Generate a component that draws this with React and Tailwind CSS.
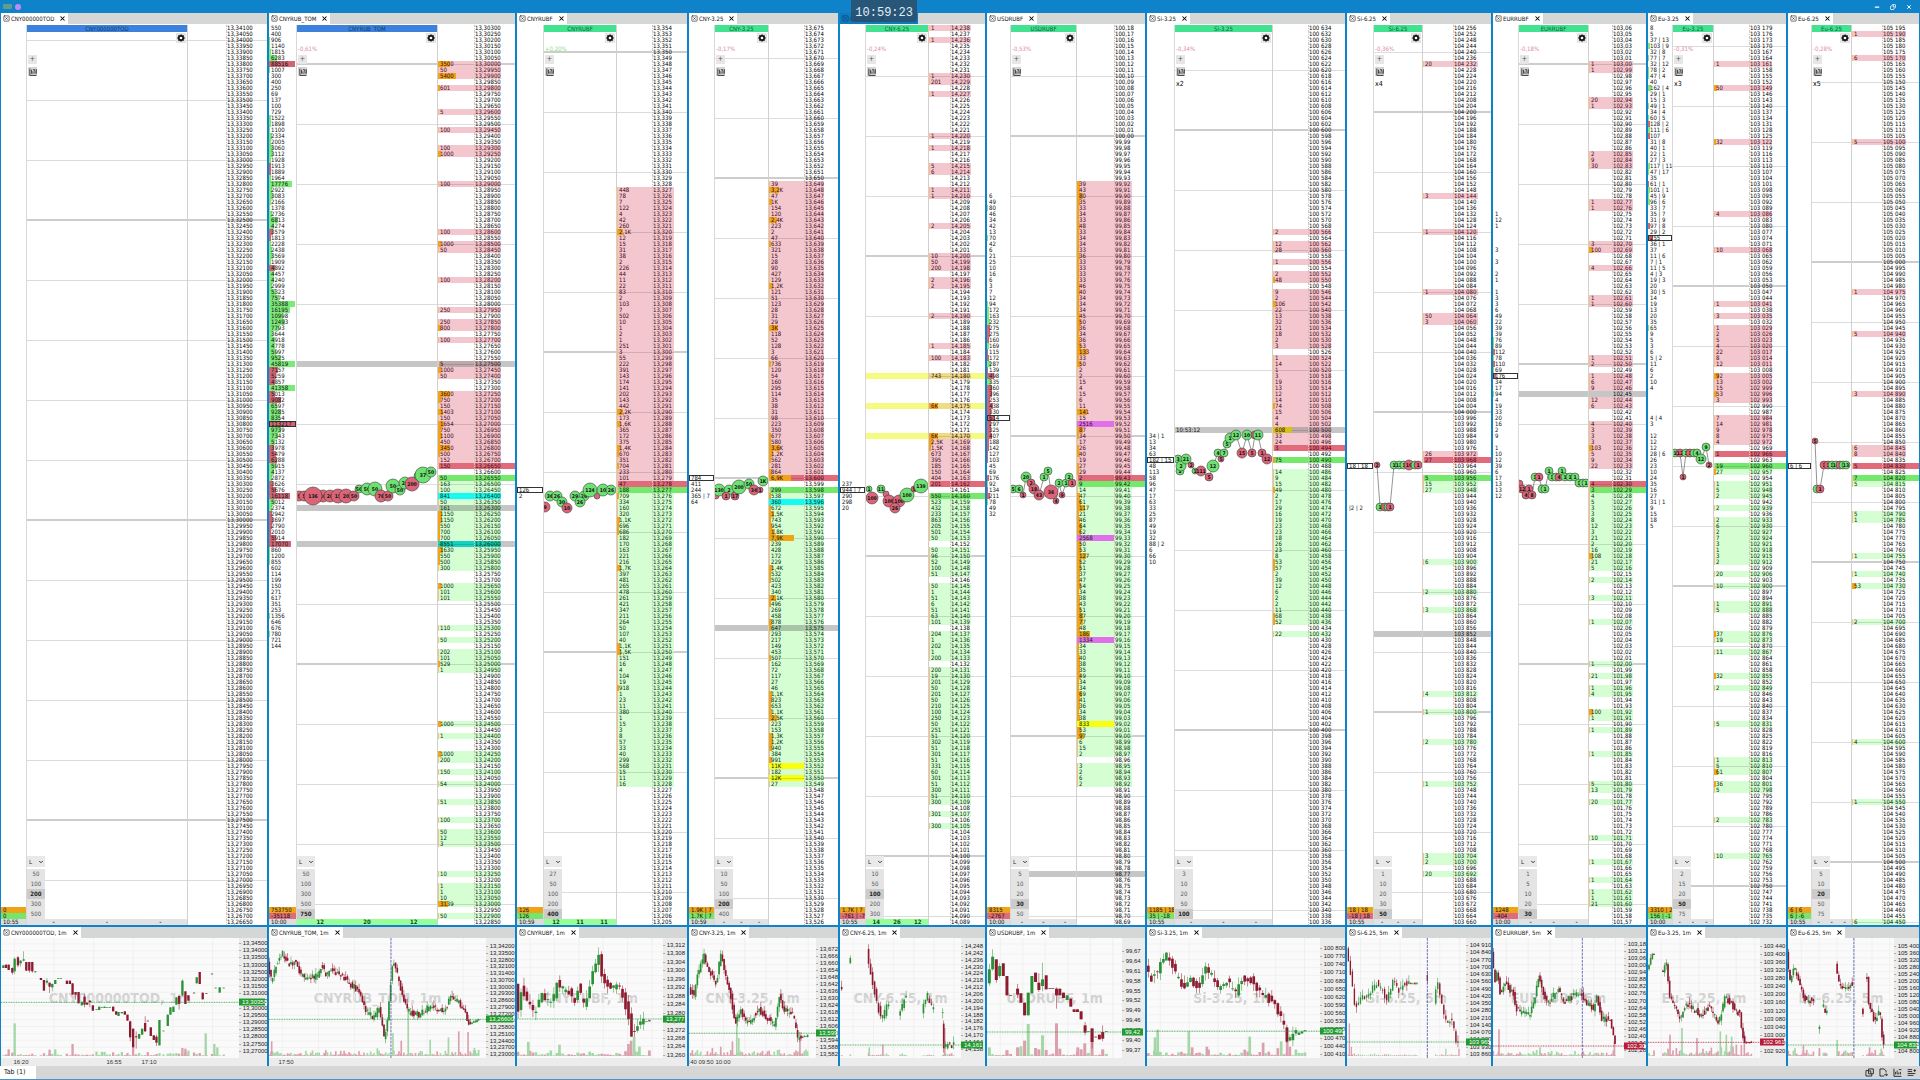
import React from "react";
import { SquareX, X, ChevronDown, Minus, Copy } from "lucide-react";

const ROWS = 150;

/* Token syntax: "@n" jumps to row n, "~n" skips n rows, "." skips one row. */
function parse(text) {
  const out = {};
  let row = 0;
  for (const t of text.trim().split(/\s+/)) {
    if (!t) continue;
    if (t[0] === "@") row = Number(t.slice(1));
    else if (t[0] === "~") row += Number(t.slice(1));
    else if (t === ".") row += 1;
    else out[row++] = t;
  }
  return out;
}

const toNumber = (s) => {
  const n = parseFloat(s.replace(",", "."));
  return s.includes("K") ? n * 1000 : n;
};

const withSpace = (n) => `${Math.floor(n / 1000)} ${String(n % 1000).padStart(3, "0")}`;
function formatPrice(n, dec) {
  if (dec === 0) return withSpace(n);
  const s = String(n);
  return `${s.slice(0, -dec)},${s.slice(-dec)}`;
}

const books = [
  {
    name: "CNY000000TOD", grow: "grow-[266]", blue: true, base: 1334100, step: 50, dec: 5, minor: 2, major: 32,
    cols: ["w-[26px]", "w-[39px]", "w-[27px]", "w-[14px]"], inset: "left-[26px] right-[80px]",
    vol: "", scale: 1, cluster: "", cscale: 1, levels: [50, 100, 200, 300, 500], active: 200,
    foot: ["0", "0", "10:55"], up: true, counts: null, left: 27, trades: [],
  },
  {
    name: "CNYRUB_TOM", grow: "grow-[246]", blue: true, change: "-0,61%", base: 1330300, step: 50, dec: 5, minor: 6, major: 6,
    cols: ["w-[28px]", "w-[37px]", "w-[27px]", "w-[14px]"], inset: "left-[28px] right-[78px]",
    bands: { 56: "gray", 80: "gray", 86: "gray" }, ask: 73, bid: 75,
    vol: "@6 3500 50 5400 . 601 ~3 5 ~2 100 ~2 100 1000 ~4 100 ~7 100 . 1000 50 ~4 100 ~4 250 . 250 800 . 100 ~3 5 1000 50 ~2 3600 750 150 1403 150 1654 750 1100 450 3450 500 152 150 . 50 163 100 841c 50 161 1150 1150 550 700 700 8551c 1630 550 500 300 ~2 1000 101 101 ~4 110 . 50 . 202 101 529 1 ~8 1000 . 1 ~2 1000 200 . 150 . 54 ~2 51 ~2 100 . 50 12 3 ~4 10 . 1 1 10 3139 . 50",
    scale: 300,
    cluster: "550 400 906 1140 1815 6283 88516r 1007 300 400 250 69 137 100 729 1522 1898 1100 2334 2005 3060 3112 1928 1913r 1889r 1964 17776 2922 3083 2166 1378 2736 6813 4274 3579r 1813r 2228 2438 3569 1909 4892r 4457 4240 2999 5323 7574 35388 16195 10998 12493 7793 3644 4918 4778 5997 9525 45819 7157r 5259r 4857r 41358 5013r 9082r 6597 9285 8354 113217r# 9739 7343 5132 3978r 5479r 6288r 5915 4137 2872 3626r 5676r 16118r 5012 2374 2942r 3697r 2790r 2010r 5914r 17070r 860 1200 855 602 114 199 150 271 617 351 253 1356 646 676 780 721 144",
    cscale: 750, levels: [50, 100, 300, 500, 750], active: 750,
    foot: ["753750", "-35118", "10:00"], up: false, counts: [12, 20, 12], left: 297,
    trades: [[299,496,5,"r","5"],[304,496,5,"r","5"],[323,496,6,"r","10"],[313,496,9,"r","136"],[330,496,6,"r","20"],[338,496,7,"r","15"],[346,496,7,"r","20"],[354,496,5,"r","50"],[359,489,4,"g","50"],[367,489,6,"g","50"],[375,489,7,"g","50"],[381,496,6,"r","76"],[388,496,5,"r","50"],[393,486,7,"g","50"],[400,490,5,"g","50"],[405,483,6,"g","20"],[412,484,7,"r","200"],[418,476,4,"g","1"],[423,475,8,"g","37"],[431,472,5,"g","50"]],
  },
  {
    name: "CNYRUBF", grow: "grow-[170]", change: "+0,20%", gain: true, base: 13354, step: 1, dec: 3, minor: 4, major: 4,
    cols: ["w-[27px]", "w-[36px]", "w-[22px]", "w-[13px]"], inset: "left-[27px] right-[71px]", ask: 76, bid: 77,
    vol: "@27 448 78 7 122 4 42 260 2,1K 12 15 31 38 2 226 44 11 22 83 2 103 7 502 10 1 2 1 251 3 55 222 391 143 174 141 202 143 442 2,2K 173 1,6K 365 172 375 1,4K 670 351 704 233 101 47 188 709 334 160 320 1,1K 696 686 182 170 163 221 216 1,7K 397 481 265 478 261 421 347 211 264 50 107 40 1,1K 1,5K 151 16 4 104 19 918 1 23 11 380 1 15 3 8 57 33 40 299 568 15 11 16",
    scale: 380, cluster: "@77 126# 2", cscale: 99999, levels: [27, 50, 100, 200, 400], active: 400,
    foot: ["126", "126", "10:59"], up: true, counts: [12, 11, 11], left: 544,
    trades: [[545,507,5,"r","9"],[550,496,5,"g","36"],[557,496,5,"g","26"],[562,502,5,"g","30"],[567,508,5,"r","10"],[575,496,5,"g","29"],[584,496,5,"g","26"],[580,502,5,"g","26"],[597,496,3,"r",""],[590,490,7,"g","124"],[603,490,6,"g","10"],[611,490,5,"g","26"]],
  },
  {
    name: "CNY-3.25", grow: "grow-[149]", change: "-0,17%", base: 13675, step: 1, dec: 3, minor: 5, major: 25,
    cols: ["w-[26px]", "w-[36px]", "w-[20px]", "w-[14px]"], inset: "left-[26px] right-[70px]", ask: 75, bid: 77, bands: { 100: "gray" },
    vol: "@26 39 3,2K 47 1K 154 120 2,4K 223 2 47 633 321 15 28 90 427 129 1,2K 121 51 123 28 31 29 3K 118 52 128 3 66 736 120 54 160 295 114 35 38 31 98 223 350 677 580 3,6K 1,2K 562 281 864 6,9K . 299 538 360c 672 1,5K 743 954 1,8K 7,9K 239 428 172 229 1,4K 532 502 423 340 2,1K 496 269 458 878 647 293 217 149 453 507 162 72 117 27 46 1,1K 823 653 1,1K 2,5K 223 153 1,3K 1,2K 940 384 991 11Ky 182 12Ky 27",
    scale: 320, cluster: "@75 784# 411 244 365_|_7 64", cscale: 99999, levels: [10, 50, 100, 200, 400], active: 200,
    foot: ["1.9K | 7", "1.7K | 7", "10:59"], up: true, counts: null, left: 715,
    trades: [[716,496,3,"r",""],[719,490,6,"g","130"],[729,490,5,"g","2"],[726,496,4,"r","1"],[735,496,4,"r","17"],[739,487,7,"g","200"],[749,484,5,"g","50"],[754,490,5,"r","34"],[760,490,3,"r","1"],[763,481,5,"g","1K"]],
  },
  {
    name: "CNY-6.25", grow: "grow-[145]", change: "-0,24%", base: 14238, step: 1, dec: 3, minor: 8, major: 38, focused: true,
    cols: ["w-[26px]", "w-[22px]", "w-[21px]", "w-[14px]"], inset: "left-[26px] right-[57px]", ask: 76, bid: 78,
    bands: { 58: "yellow", 63: "yellow", 68: "yellow" },
    vol: "1 . 1 ~5 1 201 . 1 ~6 1 . 1 ~2 5 6 ~2 1 1 ~4 2 ~4 10 50 200 . 2 2 ~4 2 ~4 1 . 100 ~2 743 ~4 6K ~4 6K 2,5K 1,5K 673 395 185 150 404 201 . 550 523 432 233 863 205 501 50 . 50 96 52 100 51 . 50 1 51 6 51 63 101 . 204 1 202 1 200 . 200 19 201 50 201 50 210 100 250 50 251 51 302 51 301 51 331 60 301 51 300 51 300 . 301 . 300",
    scale: 650, cluster: "@76 237 944_|_7# 290 298 20", cscale: 99999, levels: [10, 50, 100, 200, 300], active: 100,
    foot: ["1.7K | 7", "-761 | -7", "10:55"], up: false, counts: [14, 26, 12], left: 866,
    trades: [[869,489,3,"g","1"],[881,489,4,"g","11"],[872,498,6,"r","100"],[886,494,3,"r",""],[889,501,6,"r","100"],[899,501,6,"r","100"],[895,508,5,"r","26"],[907,495,7,"g","100"],[914,489,3,"r","5"],[921,486,7,"g","139"]],
  },
  {
    name: "USDRUBF", grow: "grow-[158]", change: "-0,53%", base: 10018, step: 1, dec: 2, minor: 8, major: 18,
    cols: ["w-[24px]", "w-[38px]", "w-[18px]", "w-[13px]"], inset: "left-[24px] right-[69px]", ask: 75, bid: 76, bands: { 141: "gray" },
    vol: "@26 39 43 80 35 33 34 33 48 33 34 34 33 36 33 33 33 33 46 40 34 34 34 45 50 36 34 36 53 133 33 50 2 2 15 4 15 6 11 141 15 2516m 87 34 17 26 40 19 27 29 2 9 14 47 61 117 21 46 64 62 2568m 50 53 127 52 51 37 47 54 34 38 43 51 87 77 48 186 1334m 34 33 40 38 35 49 34 34 69 41 36 34 38 833y 53 97 6 15 2 . 3 2 6 2",
    scale: 14, cluster: "@28 6 49 80 46 34 42 13 70 42 6 21 25 10 16 6 3 7 12 94 172 163 232 275r 275r 160r 169 115r 172r 287 139r 498r 335 360r 396r 253r 438r 330r 614r# 297r 325r 407r 188r 142r 127r 103r 45 69 176r 92 134r 211r 78 49 32",
    cscale: 70, levels: [5, 10, 20, 30, 50], active: 30,
    foot: ["8315", "-2767", "10:00"], up: false, counts: null, left: 1011, line: true,
    trades: [[1013,489,4,"g","5"],[1019,489,4,"g","6"],[1023,495,3,"r","1"],[1026,477,5,"g","20"],[1031,483,4,"r","2"],[1034,489,5,"r","18"],[1039,495,5,"r","43"],[1044,477,4,"g","1"],[1048,471,4,"g","5"],[1051,492,7,"r","36"],[1056,501,3,"r","4"],[1059,483,4,"g","2"],[1062,495,3,"r","9"],[1066,483,4,"g","1"],[1069,477,4,"g","2"],[1072,483,4,"r","1"]],
  },
  {
    name: "Si-3.25", grow: "grow-[198]", change: "-0,34%", mult: "x2", base: 100634, step: 2, dec: 0, minor: 7, major: 17,
    cols: ["w-[28px]", "w-[36px]", "w-[23px]", "w-[14px]"], inset: "left-[28px] right-[73px]", ask: 70, bid: 72, bands: { 67: "gray" }, bandText: "10:53:12",
    vol: "@34 2 . 12 28 . 1 . 2 48 . 9 2 106 22 13 32 21 18 2 3 . 1 14 1 3 19 13 12 14 74 15 4 4 608 33 24 3 . 75 . 14 9 15 49 2 17 29 16 19 23 23 18 26 23 8 53 57 2 39 12 6 2 2 11 68 52 . 22",
    scale: 32, cluster: "@68 34_|_1 13 34 63 182_|_15# 48 113 58 96 47 17 63 33 25 87 49 19 32 88_|_2 6 66 10", cscale: 99999,
    levels: [3, 10, 20, 50, 100], active: 100, foot: ["1185 | 18", "35 | -18", "10:55"], up: true, counts: null, left: 1175, line: true,
    trades: [[1178,459,4,"g","3"],[1180,471,4,"g","2"],[1181,466,5,"g","2"],[1186,459,5,"g","21"],[1191,465,3,"r","2"],[1195,471,3,"g","1"],[1201,471,5,"r","111"],[1209,477,4,"r","5"],[1213,466,6,"g","12"],[1218,453,4,"g","4"],[1224,453,4,"g","7"],[1221,459,3,"r","5"],[1227,444,4,"g","5"],[1230,438,5,"g","1"],[1236,435,5,"g","12"],[1242,453,5,"r","15"],[1247,435,5,"g","10"],[1252,453,4,"r","5"],[1255,435,4,"r","1"],[1258,435,5,"g","11"],[1262,453,4,"r","1"],[1267,459,5,"r","12"]],
  },
  {
    name: "Si-6.25", grow: "grow-[144]", change: "-0,36%", mult: "x4", base: 104256, step: 4, dec: 0, minor: 4, major: 14,
    cols: ["w-[27px]", "w-[31px]", "w-[25px]", "w-[13px]"], inset: "left-[27px] right-[69px]", ask: 72, bid: 75, bands: { 101: "gray" },
    vol: "@6 20 @28 3 @34 1 @44 1 @48 50 3 @71 26 27 @75 5 15 27 @89 6 @94 2 @97 3 @111 4 @114 1 @119 2 @126 1 @138 3 2 @141 20",
    scale: 60, cluster: "@73 18_|_18# @80 |2_|_2", cscale: 99999, levels: [1, 10, 20, 30, 50], active: 50,
    foot: ["18 | 18", "-18 | 18", "10:55"], up: false, counts: null, left: 1374, line: true,
    trades: [[1377,465,3,"r","2"],[1380,507,4,"g","1"],[1385,507,4,"r","1"],[1388,507,4,"g","1"],[1390,507,4,"r","1"],[1394,465,4,"g","1"],[1399,465,4,"g","12"],[1404,465,4,"g","1"],[1409,465,5,"r","10"],[1415,465,4,"g","1"],[1418,465,4,"r","1"]],
  },
  {
    name: "EURRUBF", grow: "grow-[153]", change: "-0,18%", base: 10306, step: 1, dec: 2, minor: 6, major: 6,
    cols: ["w-[26px]", "w-[24px]", "w-[21px]", "w-[13px]"], inset: "left-[26px] right-[58px]", ask: 76, bid: 77, bands: { 61: "gray" },
    vol: "@6 1 1 @12 20 1 @21 2 9 30 @29 1 1 @36 3 100 @40 4 @45 1 1 @55 1 2 @58 1 6 9 . 12 6 @66 4 3 3 3 103 5 9 22 @76 4 3 4 5 3 3 8 12 3 21 2 16 108 21 5 . 2 ~2 3 @99 1 @106 1 @108 21 @110 1 4 @114 100 1 @117 1 @121 1 @126 5 13 @129 20 @135 10 @139 1 @142 1 @144 1 1 21",
    scale: 25, cluster: "@31 1 12 1 @37 3 @39 3 @41 2 1 @44 1 3 3 6 49 22 39 39 76 89 112r 78 110r 69 176r# 34 17 94 4 19 33 20 16 2 9 . 1 10 12 39 6 17 13 13 12", cscale: 50,
    levels: [1, 5, 10, 20, 30], active: 30, foot: ["1248", "-404", "10:00"], up: false, counts: null, left: 1519, line: true,
    trades: [[1519,484,4,"r",""],[1522,489,4,"r","12"],[1529,489,4,"r","1"],[1526,495,4,"r","4"],[1532,495,4,"r","8"],[1535,477,4,"g","1"],[1539,477,4,"r","1"],[1542,489,4,"g","1"],[1545,489,4,"g","1"],[1549,471,4,"g","1"],[1552,477,4,"g","1"],[1556,477,4,"g","1"],[1559,477,4,"r","4"],[1562,471,4,"g","1"],[1565,477,4,"g","1"],[1570,477,4,"g","1"],[1575,477,4,"g","1"],[1579,483,4,"g","1"],[1583,483,4,"g","1"],[1586,483,4,"g","1"]],
  },
  {
    name: "Eu-3.25", grow: "grow-[138]", change: "-0,31%", mult: "x3", base: 103179, step: 3, dec: 0, minor: 3, major: 43,
    cols: ["w-[25px]", "w-[36px]", "w-[23px]", "w-[14px]"], inset: "left-[25px] right-[73px]", ask: 71, bid: 73,
    vol: "@6 1 @10 50 @19 32 @31 4 @37 10 @46 1 @48 3 @50 1 2 5 4 22 8 12 @58 92 13 15 53 3 @65 7 14 9 8 4 @71 1 @73 19 27 @76 1 5 2 @80 2 @82 2 6 2 7 3 1 3 2 @91 20 @93 10 @96 1 5 @101 37 19 @104 11 @108 32 @110 2 @116 5 @122 1 5 61 @126 36 5 @132 2 @138 10",
    scale: 17, cluster: "8 5 37_|_13 103_|_9 32_|_8 77_|_7 32_|_12 78_|_2 47_|_4 40 162_|_4 29_|_1 15_|_3 49_|_1 34_|_4 60_|_5 128_|_2r 111_|_6 107r 31_|_8 40_|_1 22_|_1 27_|_3 117_|_11 47_|_17 35 61_|_1r 101_|_1 45_|_9 96_|_6 33_|_7 35_|_7 31_|_9 97_|_8r 29_|_2 255r# 36_|_1 37 11_|_6 7_|_1 11_|_5 4_|_3 19_|_3 20 30_|_5 14 19 13 20 35 65 9 5 3 6 5_|_2 11 6 2 10 4 @65 4_|_4 3 @68 12 12 12 28_|_6 26 23 10 24 35 16 27 31_|_1 9 15 18 5", cscale: 45,
    levels: [2, 15, 20, 50, 75], active: 50, foot: ["3310 | 2", "156 | -1", "10:00"], up: true, counts: null, left: 1673, line: true,
    trades: [[1675,453,4,"g","1"],[1680,453,4,"r","12"],[1683,477,3,"r","1"],[1686,453,4,"g","1"],[1690,453,4,"r","1"],[1694,453,4,"g","1"],[1697,453,4,"g","4"],[1701,459,5,"g","12"],[1706,447,4,"g","9"],[1709,465,3,"r","2"]],
  },
  {
    name: "Eu-6.25", grow: "grow-[131]", change: "-0,28%", mult: "x5", base: 105195, step: 5, dec: 0, minor: 9, major: 39,
    cols: ["w-[24px]", "w-[31px]", "w-[24px]", "w-[13px]"], inset: "left-[24px] right-[68px]", ask: 73, bid: 75,
    vol: "@1 1 @5 6 @19 5 @44 1 @51 5 @61 3 @70 6 8 @73 5 @75 7 5 @81 5 1 @88 1 @91 1 @93 53 @99 2 @119 4 @129 1 @149 6",
    scale: 15, cluster: "@73 6_|_6#", cscale: 99999, levels: [5, 10, 20, 50, 75], active: 20,
    foot: ["6 | 6", "6 | -6", "10:55"], up: true, counts: null, left: 1812, line: true,
    trades: [[1815,441,3,"r","5"],[1817,489,4,"g","1"],[1820,489,4,"r","1"],[1824,465,4,"r","1"],[1828,465,4,"r","1"],[1832,465,4,"g","1"],[1836,465,4,"g","14"],[1840,465,4,"r","1"],[1843,465,4,"g","1"],[1846,465,4,"g","13"]],
  },
];

const LINE = "bg-[linear-gradient(#dcdcdc,#dcdcdc)] bg-[length:100%_1px] bg-[position:0_3px] bg-no-repeat";
const THICK = "bg-[linear-gradient(#cdcdcd,#cdcdcd)] bg-[length:100%_2px] bg-[position:0_2px] bg-no-repeat";
const DARKLINE = "bg-[linear-gradient(#00000022,#00000022)] bg-[length:100%_1px] bg-[position:0_3px] bg-no-repeat";

function Tab({ label, focused }) {
  const skin = focused ? "text-[#0b3c66]" : "bg-white text-[#111]";
  return (
    <div className={"flex h-[11px] shrink-0 overflow-hidden " + (focused ? "bg-[linear-gradient(90deg,#1179bd_78px,#d4d7d5_78px)]" : "bg-[#d4d7d5]")}>
      <div className={"flex items-center whitespace-nowrap px-[2px] text-[6px] leading-[8px] " + skin}>
        <SquareX className="mr-px size-[7px] shrink-0" strokeWidth={2} />
        <span>{label}</span>
        <button aria-label={"Close " + label} className="ml-[5px] flex"><X className="size-[7px] text-black" strokeWidth={3.5} /></button>
      </div>
    </div>
  );
}

function ClusterCell({ book, token, row }) {
  const base = "relative overflow-hidden whitespace-nowrap border-r border-[#d8d8d8] p-0 pl-[2px] text-[#111]";
  if (row >= 147) {
    const tone = row === 147 ? "bg-[#efa316]" : row === 149 ? "bg-[#dcdcdc]" : book.up ? "bg-[#76e56c]" : "bg-[#e06b7b]";
    return <td className={base + " " + tone}>{book.foot[row - 147]}</td>;
  }
  if (!token) return <td className={base} />;
  const boxed = token.includes("#");
  const red = token.includes("r");
  const label = token.replace(/[r#]/g, "").replace(/_/g, " ");
  const width = Math.min(26, Math.floor(parseFloat(label) / book.cscale));
  return (
    <td className={base}>
      {width > 0 && <span className={"absolute inset-y-0 left-0 " + (red ? "bg-[#cf6675]" : "bg-[#7cea78]")} style={{ width }} />}
      {boxed && <span className="absolute inset-0 border border-[#333]" />}
      <span className="relative">{label}</span>
    </td>
  );
}

function Row({ book, row, volume, cluster }) {
  const band = book.bands && book.bands[row];
  const isMajor = row % 50 === book.major % 50;
  const isMinor = row % 10 === book.minor % 10;
  const side = volume && (row <= book.ask ? "ask" : "bid");
  const best = row === book.ask ? "ask" : row === book.bid ? "bid" : null;
  const flag = volume && /[cmy]$/.test(volume) ? volume.slice(-1) : null;
  const label = volume ? volume.replace(/[cmy]$/, "") : "";

  let fill = "";
  if (side) fill = side === "ask" ? "bg-[#f4c6ce]" : "bg-[#d5ffd3]";
  if (best) fill = best === "ask" ? "bg-[#e16b7b]" : "bg-[#74e96b]";
  if (flag === "c") fill = band ? "bg-[#16d0c0]" : "bg-[#13fbf3]";
  if (band === "gray" && flag !== "c") fill = !side ? "bg-[#c6c6c6]" : side === "ask" ? "bg-[#bda9ac]" : "bg-[#a9c5a8]";
  if (band === "yellow") fill = "bg-[#f0dc86]";
  let cell = fill;
  if (flag === "m") cell = "bg-[#df70ea]";
  if (flag === "y") cell = "bg-[#faff0e]";
  const bandTone = band === "gray" ? "bg-[#c6c6c6]" : band === "yellow" ? "bg-[#f5fa80]" : "";
  const line = band ? "" : isMajor ? THICK : isMinor ? LINE : "";
  const inner = isMajor || isMinor ? DARKLINE : "";
  const tail = best ? fill : bandTone;
  const text = side === "ask" ? "text-[#3c0612]" : side === "bid" ? "text-[#062a08]" : "text-black";
  const width = volume && !flag ? Math.max(1, Math.min(26, Math.round(toNumber(label) / book.scale))) : 0;
  const tone = row === 67 && book.bandText ? "bg-[#d2c414]" : width > 1 ? "bg-[#f0a416]" : "bg-[#f3c08a]";

  return (
    <tr className="h-[6px]">
      <ClusterCell book={book} token={cluster} row={row} />
      <td className={"p-0 " + bandTone + " " + line}>{band && book.bandText ? <span className="pl-px">{book.bandText}</span> : null}</td>
      <td className={"relative border-l border-[#d0d0d0] p-0 pl-[2px] " + cell + " " + (fill ? inner : line) + " " + text}>
        {width > 0 && <span className={"absolute inset-y-0 left-0 " + tone} style={{ width }} />}
        <span className="relative">{label}</span>
      </td>
      <td className={"whitespace-nowrap border-l border-dotted border-[#c8c8c8] p-0 " + fill + " " + (fill ? inner : line) + " " + text}>
        {formatPrice(book.base - row * book.step, book.dec)}
      </td>
      <td className={"p-0 " + tail + " " + (best ? "" : line)} />
    </tr>
  );
}

function Trades({ book }) {
  const px = (x) => x - book.left;
  const py = (y) => y - 25;
  return (
    <svg className="absolute inset-0 h-full w-full" aria-hidden="true">
      {book.line && <polyline points={book.trades.map((t) => px(t[0]) + "," + py(t[1])).join(" ")} fill="none" stroke="#666" strokeWidth="0.7" />}
      {book.trades.map((t, i) => (
        <g key={i}>
          <circle cx={px(t[0])} cy={py(t[1])} r={t[2]} fill={t[3] === "r" ? "#dc6478" : "#6de273"} stroke="#3d3d3d" strokeWidth="0.6" />
          <text x={px(t[0])} y={py(t[1]) + 2} textAnchor="middle" className="fill-[#111] text-[5px] font-bold">{t[4]}</text>
        </g>
      ))}
    </svg>
  );
}

function GearIcon() {
  return (
    <svg viewBox="0 0 20 20" className="size-[8px]" aria-hidden="true">
      <path d="M10 1v18M1 10h18M3.6 3.6l12.8 12.8M16.4 3.6L3.6 16.4" stroke="#111" strokeWidth="3.4" />
      <circle cx="10" cy="10" r="5.4" fill="#fff" stroke="#111" strokeWidth="4" />
    </svg>
  );
}

function StatIcon() {
  return (
    <svg viewBox="0 0 14 14" className="size-[8px]" fill="none" stroke="#333" strokeWidth="1.6" aria-hidden="true">
      <path d="M1.5 1v12H13M4.5 3v7M7 6v4M7 3h3v3M10.5 6v4M12.8 2v8" />
    </svg>
  );
}

const SQUARE = "flex size-[9px] items-center justify-center text-[#555]";

function Controls({ book }) {
  const head = book.blue ? "bg-[#3c82dc] text-[#12386e]" : "bg-[#42e291] text-[#125c3c]";
  return (
    <div className="absolute inset-0 flex flex-col">
      <div className={"h-[7px] shrink-0 overflow-hidden text-center text-[6px] leading-[7px] " + head}>{book.name}</div>
      <button aria-label={"Settings " + book.name} className="mr-px mt-px flex size-[10px] items-center justify-center self-end bg-[#e4e4e4]">
        <GearIcon />
      </button>
      <div className={"mt-[3px] h-[6px] pl-px text-[6px] leading-[6px] " + (book.gain ? "text-[#86dd8b]" : "text-[#de88ab]")}>{book.change}</div>
      <button aria-label="Add" className={SQUARE + " ml-px mt-[3px] bg-[#e6e6e6] text-[7px] leading-[9px]"}>+</button>
      <button aria-label="Statistics" className={SQUARE + " ml-px mt-[3px] bg-[#d4d4d4]"}><StatIcon /></button>
      <div className="mt-[4px] h-[8px] pl-px text-[7px] leading-[8px] text-black">{book.mult}</div>
      <div className="mt-auto flex w-[18px] flex-col">
        <label className="relative mb-[2px] block h-[11px] bg-[#e9e9e9]">
          <select aria-label={"Mode " + book.name} className="block h-[11px] w-full appearance-none border-0 bg-transparent p-0 pl-[2px] text-[6px] leading-[11px] text-[#222] outline-none"><option>L</option></select>
          <ChevronDown className="pointer-events-none absolute right-px top-[3px] size-[6px] text-[#333]" strokeWidth={4} />
        </label>
        {book.levels.map((v) => (
          <button key={v} className={"h-[10px] text-[6px] leading-[10px] " + (v === book.active ? "bg-[#cbcbcb] font-bold text-[#222]" : "bg-[#e4e4e4] text-[#555]")}>{v}</button>
        ))}
      </div>
      <div className={"flex h-[6px] shrink-0 justify-around text-[6px] font-bold leading-[6px] " + (book.counts ? "bg-[#98ff98] text-[#114a11]" : "bg-[#e2e2e2] text-[#555]")}>
        {(book.counts || ["-", "-", "-"]).map((c, i) => <span key={i}>{c}</span>)}
      </div>
    </div>
  );
}

function Ladder({ book }) {
  const vols = parse(book.vol);
  const clusters = parse(book.cluster);
  return (
    <section className={"flex min-w-0 basis-0 flex-col bg-white " + book.grow}>
      <Tab label={book.name} focused={book.focused} />
      <div className="relative mt-px">
        <table className="w-full table-fixed border-separate border-spacing-0 text-[6px] leading-[6px]" aria-label={book.name}>
          <colgroup>
            <col className={book.cols[0]} /><col /><col className={book.cols[1]} /><col className={book.cols[2]} /><col className={book.cols[3]} />
          </colgroup>
          <tbody>
            {Array.from({ length: ROWS }, (_, i) => <Row key={i} book={book} row={i} volume={vols[i]} cluster={clusters[i]} />)}
          </tbody>
        </table>
        <div className={"absolute inset-y-0 " + book.inset}>
          <Trades book={book} />
          <Controls book={book} />
        </div>
      </div>
    </section>
  );
}

/* Chart units are thirds of a pixel; y starts 70 units above the plot's top. */
const charts = [
  {
    name: "CNY000000TOD, 1m", axis: "w-[28px]", x0: 3, x1: 718, from: 1334500, step: 500, dec: 5, n: 16, pad: "pt-[2px] pb-[4px]",
    badge: "13,30350", at: 263, times: [["16:20", 20], ["16:55", 113], ["17:10", 148]], width: 7,
    exact: "g10,152,160 r18,150,160 r26,150,166 r37,160,174,158,180 g44,132,170,128,178 r54,128,152,124,158 g62,138,146,136,156 g71,134,138,110,140 r79,142,168 r88,142,168,142,174 r97,142,170,142,174 g106,170,173 r123,190,196 r132,196,228 g141,198,204,190,210 r149,204,216,204,235 g157,208,218,206,230 g166,196,208 g175,191,193 g183,191,193 r201,198,208 r210,198,208 r218,206,240 r227,232,240,232,255 r236,232,266 g246,262,272 r254,246,270,236,278 r262,264,270 r270,258,262,256,278 r279,272,288 g290,284,286 g298,276,286 g306,277,279 g314,276,280 g322,277,279 g330,277,279 r340,276,290 r349,290,300 g356,292,304 g366,292,296 r375,290,300 r383,300,318 r391,320,368,318,380 r400,342,398 r409,365,368,350,402 g418,358,372 g427,342,360 r436,325,350,305,352 r444,318,320 r453,338,364 r462,362,376 r470,366,384,360,394 g479,316,392 g491,348,350 g504,300,334 g512,278,300 g521,276,292 g530,248,270 r538,244,268,240,285 g548,198,242,194,246 r557,230,268 r566,242,258 r583,234,236 g591,188,206 r600,172,208 r609,234,254 r620,235,237 r637,177,179 g648,219,221 g660,218,234 g672,219,221",
    spikes: "g44,326 r26,404 r149,405 g166,404 r218,388 r400,398 r548,400 r557,402 g566,408 g618,356 g644,388 g653,398", vol: 16,
  },
  {
    name: "CNYRUB_TOM, 1m", axis: "w-[29px]", x0: 807, x1: 1460, from: 1334200, step: 700, dec: 5, n: 17, pad: "pt-[5px] pb-[1px]",
    badge: "13,26600", at: 314, times: [["17:50", 17]], width: 5, vline: 1174, gap: 5,
    path: [[[808,150],[820,200],[832,150],[852,115],[875,150],[890,138],[912,185],[960,185],[970,150],[985,180],[1000,165],[1030,180],[1060,210],[1080,225],[1105,290],[1130,310],[1142,275],[1150,310],[1160,380],[1170,290],[1182,160],[1190,145],[1212,240],[1230,290],[1265,300],[1300,270],[1340,295],[1358,240],[1400,280],[1414,330],[1440,314]]],
    spikes: "r815,380 g1180,355 r1205,378 g1226,290 g1292,375 g1347,368 r1378,350 r1406,352 g1425,400", vol: 24,
  },
  {
    name: "CNYRUBF, 1m", axis: "w-[24px]", x0: 9, x1: 449, from: 13312, step: 4, dec: 3, n: 14, pad: "pt-[4px] pb-0",
    badge: "13,277", at: 313, times: [], width: 8, gap: 9,
    path: [[[12,220],[20,285],[30,225],[45,250],[70,300],[92,230],[100,260],[125,260],[140,190],[150,220],[170,225],[190,260],[200,215],[222,275],[240,195],[262,110],[270,175],[290,210],[330,215],[345,270],[357,320],[365,370],[378,330],[400,318],[415,318]]],
    spikes: "g43,382 g137,390 r345,388 r353,378 g362,366 g378,396", vol: 20,
  },
  {
    name: "CNY-3.25, 1m", axis: "w-[22px]", x0: 525, x1: 905, from: 13672, step: 6, dec: 3, n: 16, pad: "pt-[8px] pb-[1px]",
    badge: "13,599", at: 356, times: [["9:40", 2], ["09:50", 17], ["10:00", 34]], width: 5, gap: 5,
    path: [[[530,226],[545,238],[555,180],[575,125],[590,165],[612,205],[625,115],[640,180],[655,245],[668,325],[685,290],[705,325],[740,285],[785,330],[800,245],[812,280],[842,300],[855,370],[885,362]]],
    spikes: "r620,396 r655,380 g668,300 g674,370 r857,370", vol: 26,
  },
  {
    name: "CNY-6.25, 1m", axis: "w-[24px]", x0: 979, x1: 1343, from: 14248, step: 6, dec: 3, n: 16, pad: "pt-[5px] pb-[6px]",
    badge: "14,161", at: 391, times: [], width: 5, gap: 6,
    path: [[[984,226],[988,230]], [[1010,140],[1014,132]], [[1065,110],[1072,150],[1085,215],[1105,300],[1112,310],[1128,270]], [[1160,300],[1180,250]], [[1230,295],[1245,235],[1262,280]], [[1288,292],[1290,294]], [[1291,335],[1297,390],[1325,392]]],
    spikes: "g1067,398 r1108,390 r1294,340", vol: 8,
  },
  {
    name: "USDRUBF, 1m", axis: "w-[23px]", x0: 9, x1: 415, from: 9967, step: 3, dec: 2, n: 11, pad: "pt-[10px] pb-[5px]",
    badge: "99,42", at: 352, times: [], width: 9,
    exact: "g16,164,206,148,214 g26,126,164,104,168 r37,134,196,134,204 g47,154,184,146,190 r58,146,184 r69,184,242 r80,242,244 r101,222,240,208,250 r111,236,264 r122,264,302 g133,234,302 g144,184,236 r155,174,202 r165,204,226,176,232 g176,194,214,144,230 r187,182,224 r198,221,223 r207,221,223 r218,222,242,218,282 r228,222,242 r239,234,250 g250,242,256 r261,252,276 r271,284,292 r281,284,292 r292,290,314 r304,332,354,322,362 g314,350,352 r325,342,382,340,402 r336,366,368 r347,360,374 r357,352,372,332,380 g368,350,352",
    spikes: "g16,398 r69,406 r101,398 g111,395 r122,378 g133,328 r155,400 r165,404 g176,362 r187,406 r218,326 r228,402 r282,398 r292,404 r303,386 r325,340 r357,404", vol: 14,
  },
  {
    name: "Si-3.25, 1m", axis: "w-[25px]", x0: 491, x1: 1008, from: 100800, step: 30, dec: 0, n: 14, pad: "pt-[7px] pb-[1px]",
    badge: "100 490", at: 350, times: [], width: 8, gap: 9,
    path: [[[495,165],[515,190],[530,165],[560,120],[572,150],[590,190],[610,225],[620,195],[655,215],[672,160],[695,185],[715,230],[740,195],[762,245],[778,190],[805,190],[830,225],[860,250],[890,285],[905,320],[915,370],[965,348]]],
    spikes: "g515,368 g523,345 g616,350 r626,398 r670,396 g798,366 r838,384 g892,380 r910,340 r918,396", vol: 24,
  },
  {
    name: "Si-6.25, 5m", axis: "w-[25px]", x0: 1091, x1: 1445, from: 104910, step: 70, dec: 0, n: 16, pad: "pt-[4px] pb-[1px]",
    badge: "103 965", at: 382, times: [], width: 4, gap: 6, vline: 1330,
    path: [[[1095,110],[1110,190],[1122,285],[1135,250],[1160,240],[1185,205],[1215,250],[1235,200],[1250,225],[1270,205],[1305,205]], [[1330,185],[1334,188]], [[1355,260],[1366,200],[1376,250],[1390,320],[1408,310],[1422,385]]],
    spikes: "r1098,326 r1104,396 g1385,402 r1424,402", vol: 6,
  },
  {
    name: "EURRUBF, 5m", axis: "w-[22px]", x0: 9, x1: 402, from: 10318, step: 6, dec: 2, n: 16, pad: "pt-[3px] pb-[5px]",
    badge: "102,30", at: 394, down: true, times: [], width: 5, gap: 5, vline: 277,
    path: [[[10,120],[20,200],[27,160],[35,235],[50,200],[75,240],[85,285],[125,300],[140,250],[150,185],[165,235],[180,265],[210,220],[226,260],[277,230],[290,262],[315,280],[325,240],[340,310],[365,315],[380,385]]],
    spikes: "r27,344 g150,398 r373,380", vol: 20,
  },
  {
    name: "Eu-3.25, 1m", axis: "w-[26px]", x0: 475, x1: 811, from: 103440, step: 40, dec: 0, n: 14, pad: "pt-[5px] pb-[4px]",
    badge: "102 961", at: 383, down: true, times: [], width: 5, gap: 5,
    path: [[[478,170],[490,125],[497,110]], [[520,170],[535,150],[545,240],[575,310],[595,265],[640,300],[665,275],[692,325],[712,245],[755,300],[768,385],[790,382]]],
    spikes: "r541,360 g577,340 r622,370 g692,350 g710,360 g726,366 r764,360", vol: 40,
  },
  {
    name: "Eu-6.25, 5m", axis: "w-[25px]", x0: 896, x1: 1213, from: 105400, step: 40, dec: 0, n: 16, pad: "pt-[5px] pb-[4px]",
    badge: "104 830", at: 391, times: [], width: 5, gap: 5, vline: 1093,
    path: [[[897,120],[907,200],[920,160],[950,250],[975,260]], [[990,340],[994,344]], [[1002,270],[1015,290]], [[1043,140],[1050,200],[1070,220],[1090,210]], [[1120,290],[1124,292]], [[1132,180],[1138,185],[1142,270],[1160,320],[1175,285],[1184,380]]],
    spikes: "r942,392 g1043,376 r990,400 r1140,398 g1175,402", vol: 22,
  },
];

function random(seed) {
  let s = seed;
  return () => (s = (s * 16807) % 2147483647) / 2147483647;
}

function makeCandles(chart, rnd) {
  if (chart.exact) {
    return chart.exact.split(" ").map((t) => {
      const v = t.slice(1).split(",").map(Number);
      return { c: t[0], x: v[0], t: v[1], b: v[2], hi: v[3] ?? v[1], lo: v[4] ?? v[2] };
    });
  }
  const out = [];
  for (const seg of chart.path) {
    const at = (x) => {
      for (let i = 1; i < seg.length; i++) {
        if (x <= seg[i][0]) {
          const f = (x - seg[i - 1][0]) / (seg[i][0] - seg[i - 1][0]);
          return seg[i - 1][1] + f * (seg[i][1] - seg[i - 1][1]);
        }
      }
      return seg[seg.length - 1][1];
    };
    for (let x = seg[0][0]; x < seg[seg.length - 1][0]; x += chart.gap) {
      const quiet = x > seg[seg.length - 1][0] - 25 && seg.length > 6;
      const amp = quiet ? 4 : 8 + chart.gap * 1.8;
      const a = at(x) + (rnd() - 0.5) * amp;
      const b = at(x + chart.gap) + (rnd() - 0.5) * amp;
      out.push({ c: b > a ? "r" : "g", x, t: Math.min(a, b), b: Math.max(a, b) + 2, hi: Math.min(a, b) - rnd() * amp, lo: Math.max(a, b) + rnd() * amp });
    }
  }
  return out;
}

function Plot({ chart, index }) {
  const rnd = random(97 + index * 31);
  const w = chart.x1 - chart.x0;
  const candles = makeCandles(chart, rnd);
  const bars = candles.map((c) => ({ c: c.c, x: c.x, h: 2 + rnd() * rnd() * chart.vol }));
  const spikes = chart.spikes.split(" ").map((t) => {
    const [x, y] = t.slice(1).split(",").map(Number);
    return { c: t[0], x, h: 424 - y };
  });
  const accent = chart.down ? "#b81c38" : "#229a3a";
  return (
    <svg viewBox={`0 0 ${w} 360`} preserveAspectRatio="none" className="absolute inset-0 h-full w-full" aria-hidden="true">
      {Array.from({ length: chart.n }, (_, i) => <path key={i} d={`M0 ${18 + (i * 330) / chart.n}H${w}`} stroke="#eaeaea" strokeWidth="1.5" />)}
      {Array.from({ length: 6 }, (_, i) => <path key={i} d={`M${40 + (i * w) / 6} 0V360`} stroke="#ececec" strokeWidth="2" />)}
      <g transform={`translate(${-chart.x0} -70)`}>
        {bars.concat(spikes).map((b, i) => (
          <rect key={i} x={b.x - chart.width / 2} y={424 - b.h} width={chart.width} height={b.h} fill={b.c === "r" ? "#dba0ae" : "#a5d6a8"} />
        ))}
        {candles.map((c, i) => (
          <g key={i} fill={c.c === "r" ? "#8e1a30" : "#2b9136"}>
            <rect x={c.x - 1} y={c.hi} width="2" height={c.lo - c.hi} opacity="0.75" />
            <rect x={c.x - chart.width / 2} y={c.t} width={chart.width} height={c.b - c.t} />
          </g>
        ))}
        <path d={`M${chart.x0} ${chart.at}H${chart.x1}`} stroke={accent} strokeWidth="3" strokeDasharray="3 2" opacity="0.75" />
        {chart.vline && <path d={`M${chart.vline} 70V430`} stroke="#4b55a8" strokeWidth="3" strokeDasharray="8 3" opacity="0.8" />}
      </g>
    </svg>
  );
}

function ChartPanel({ chart, index, grow }) {
  return (
    <section className={"flex min-w-0 basis-0 flex-col bg-[#ececec] " + grow}>
      <Tab label={chart.name} />
      <div className="flex flex-1">
        <div className="relative min-w-0 flex-1 overflow-hidden bg-[#fafafa]">
          <div className="flex h-full items-center justify-center whitespace-nowrap text-[14px] font-bold text-[#d2d2d2]">{chart.name}</div>
          <Plot chart={chart} index={index} />
        </div>
        <div className={"relative flex shrink-0 flex-col justify-between whitespace-nowrap font-['Liberation_Sans',sans-serif] text-[6px] leading-[6px] text-[#222] " + chart.axis + " " + chart.pad}>
          {Array.from({ length: chart.n }, (_, i) => <span key={i}>- {formatPrice(chart.from - i * chart.step, chart.dec)}</span>)}
          <span className={"absolute inset-x-0 mr-[2px] -translate-y-1/2 pl-[3px] leading-[7px] text-white " + (chart.down ? "bg-[#b81c38]" : "bg-[#229a2e]")} style={{ top: `${((chart.at - 70) / 360) * 100}%` }}>{chart.badge}</span>
        </div>
      </div>
      <div className="relative h-[8px] shrink-0 overflow-hidden font-['Liberation_Sans',sans-serif] text-[6px] leading-[8px] text-[#333]">
        {chart.times.map(([t, x]) => <span key={t} className="absolute -translate-x-1/2" style={{ left: x }}>{t}</span>)}
      </div>
    </section>
  );
}

const DOCK = "size-[9px] fill-none stroke-[#222] stroke-[1.4]";

function DockIcon({ d }) {
  return <svg viewBox="0 0 14 14" className={DOCK} aria-hidden="true"><path d={d} /></svg>;
}

export default function App() {
  return (
    <div className="flex min-h-screen flex-col overflow-hidden bg-[#0e83c9] font-['DejaVu_Sans_Condensed','Noto_Sans',sans-serif] text-[#111]">
      <header className="relative flex h-[13px] shrink-0 items-center bg-[#0e83c9] px-[3px]">
        <span className="mr-[3px] h-[5px] w-[9px] rounded-[1px] bg-[#5f9e8f]" />
        <span className="size-[6px] rounded-full bg-[#c08af0]" />
        <div className="absolute left-[46.05%] top-0 z-10 flex h-[22px] w-[66px] -translate-x-1/2 items-center justify-center rounded-b-[3px] bg-[#2b4f6b]/85 pt-[3px] font-['Liberation_Mono',monospace] text-[12px] leading-none text-[#e2edf5]">10:59:23</div>
        <div className="ml-auto mr-[5px] flex gap-[10px] text-white">
          <button aria-label="Minimize"><Minus className="size-[6px]" strokeWidth={5} /></button>
          <button aria-label="Restore"><Copy className="size-[6px] -scale-x-100" strokeWidth={3} /></button>
          <button aria-label="Close window"><X className="size-[6px]" strokeWidth={4} /></button>
        </div>
      </header>
      <main className="flex flex-1 flex-col gap-[2px]">
        <div className="flex gap-[2px] px-px">
          {books.map((b) => <Ladder key={b.name} book={b} />)}
        </div>
        <div className="flex flex-1 gap-[2px] px-px">
          {charts.map((c, i) => <ChartPanel key={c.name} chart={c} index={i} grow={books[i].grow} />)}
        </div>
      </main>
      <footer className="flex h-[14px] shrink-0 border-b border-[#4a93c8] bg-[#d6d6d6]">
        <button className="bg-white pl-[4px] pr-[11px] text-[7px] leading-[13px]">Tab (1)</button>
        <div className="ml-auto mr-[4px] flex items-center gap-[5px]">
          <button aria-label="Windows"><DockIcon d="M5 4H1.5v8.500h9V9M5.500 1.500H13V9H5.500zM5.500 4.500H9V9" /></button>
          <button aria-label="Export layout"><DockIcon d="M8 12.500H1.500v-11H8l3 3V7M8 10.500h5M11 8.500l2 2-2 2" /></button>
          <button aria-label="New chart"><DockIcon d="M1.500 1v12H13M4 10V6M6.500 10V4M9 10V7M9 2.500h4M11.500 10V6" /></button>
          <button aria-label="New list"><DockIcon d="M1 2.500h7M1 5.500h7M1 8.500h12M1 11.500h9M10 4h4M12 2v4" /></button>
        </div>
      </footer>
    </div>
  );
}
